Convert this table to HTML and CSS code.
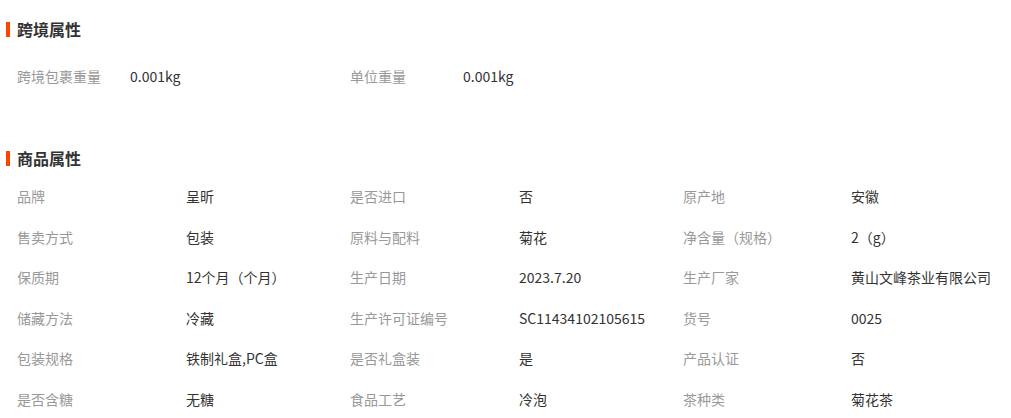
FILE: index.html
```html
<!DOCTYPE html>
<html>
<head>
    <meta charset="utf-8">
    <title>商品属性</title>
    <link rel="stylesheet" href="styles.css">
</head>
<body>

<div class="attrs">
    <h2 class="attr-title">跨境属性</h2>
    <div class="attr-list cross">
        <span class="attr-name">跨境包裹重量</span>
        <span class="attr-value">0.001kg</span>
        <span class="attr-name">单位重量</span>
        <span class="attr-value">0.001kg</span>
    </div>

    <h2 class="attr-title goods">商品属性</h2>
    <div class="attr-list">
        <span class="attr-name">品牌</span>
        <span class="attr-value">呈昕</span>
        <span class="attr-name">是否进口</span>
        <span class="attr-value">否</span>
        <span class="attr-name">原产地</span>
        <span class="attr-value">安徽</span>

        <span class="attr-name">售卖方式</span>
        <span class="attr-value">包装</span>
        <span class="attr-name">原料与配料</span>
        <span class="attr-value">菊花</span>
        <span class="attr-name">净含量（规格）</span>
        <span class="attr-value">2（g）</span>

        <span class="attr-name">保质期</span>
        <span class="attr-value">12个月（个月）</span>
        <span class="attr-name">生产日期</span>
        <span class="attr-value">2023.7.20</span>
        <span class="attr-name">生产厂家</span>
        <span class="attr-value">黄山文峰茶业有限公司</span>

        <span class="attr-name">储藏方法</span>
        <span class="attr-value">冷藏</span>
        <span class="attr-name">生产许可证编号</span>
        <span class="attr-value">SC11434102105615</span>
        <span class="attr-name">货号</span>
        <span class="attr-value">0025</span>

        <span class="attr-name">包装规格</span>
        <span class="attr-value">铁制礼盒,PC盒</span>
        <span class="attr-name">是否礼盒装</span>
        <span class="attr-value">是</span>
        <span class="attr-name">产品认证</span>
        <span class="attr-value">否</span>

        <span class="attr-name">是否含糖</span>
        <span class="attr-value">无糖</span>
        <span class="attr-name">食品工艺</span>
        <span class="attr-value">冷泡</span>
        <span class="attr-name">茶种类</span>
        <span class="attr-value">菊花茶</span>
    </div>
</div>

</body>
</html>
```

FILE: styles.css
```css
body {
    font-family: "Microsoft YaHei", "Noto Sans CJK SC", sans-serif;
    background-color: #fff;
    color: #333;
    margin: 0;
}

.attrs {
    padding: 19px 0 0 6px;
}

.attr-title {
    display: flex;
    align-items: center;
    gap: 7px;
    margin: 0;
    height: 20px;
    font-size: 16px;
    font-weight: bold;
    color: #333;
}

.attr-title::before {
    content: "";
    width: 4px;
    height: 15px;
    background-color: #ff4400;
}

.attr-title.goods {
    margin-top: 52px;
}

.attr-list {
    display: grid;
    grid-template-columns: 169px 164px 169px 164px 168px 164px;
    grid-auto-rows: 40.5px;
    align-items: center;
    padding-left: 11px;
    margin-top: 8px;
    font-size: 14px;
}

.attr-list.cross {
    grid-template-columns: 113px 220px 113px 220px;
    grid-auto-rows: 40px;
    margin-top: 17px;
}

.attr-name {
    color: #999;
}

.attr-value {
    color: #333;
}
```
